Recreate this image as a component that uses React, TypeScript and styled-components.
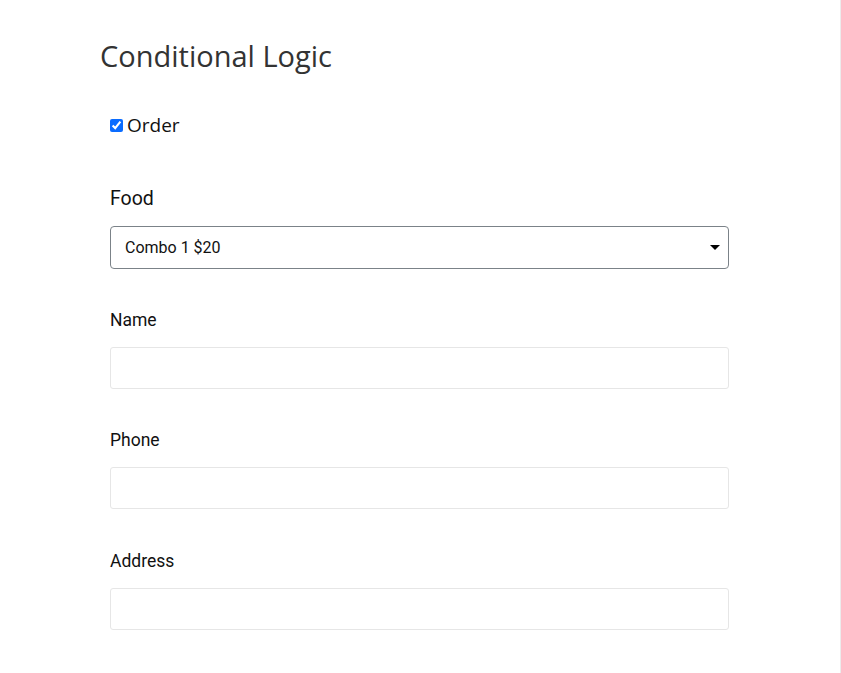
import React from "react";
import styled, { createGlobalStyle } from "styled-components";

const Global = createGlobalStyle`
  html, body { margin: 0; padding: 0; background: #fff; }
  body { width: 841px; height: 673px; overflow: hidden; }
`;

const Page = styled.div`
  box-sizing: border-box;
  width: 841px;
  height: 673px;
  border-right: 1px solid #ececec;
  padding: 37px 0 0 100px;
`;

const Title = styled.h1`
  margin: 0;
  font-family: "Open Sans", "Noto Sans", sans-serif;
  font-weight: 400;
  font-size: 29px;
  line-height: 38px;
  color: #333;
`;

const Form = styled.form`
  display: flex;
  flex-direction: column;
  width: 619px;
  margin: 0 0 0 10px;
  padding-top: 37px;
`;

const CheckRow = styled.label`
  display: flex;
  align-items: center;
  gap: 4px;
  height: 26px;
  font-family: "Open Sans", "Noto Sans", sans-serif;
  font-size: 19px;
  color: #111;
`;

const Check = styled.input`
  margin: 0;
  width: 13px;
  height: 13px;
  accent-color: #0a6cff;
`;

const Field = styled.div<{ $top: number }>`
  display: flex;
  flex-direction: column;
  margin-top: ${(p) => p.$top}px;
`;

const Label = styled.label<{ $size: number }>`
  font-family: Roboto, "Liberation Sans", sans-serif;
  font-size: ${(p) => p.$size}px;
  line-height: 24px;
  color: #111;
  margin-bottom: 15px;
`;

const SelectWrap = styled.div`
  position: relative;
  height: 43px;
`;

const Select = styled.select`
  appearance: none;
  box-sizing: border-box;
  width: 100%;
  height: 43px;
  padding: 0 14px;
  border: 1px solid #7b8288;
  border-radius: 4px;
  background: #fff;
  font-family: Roboto, "Liberation Sans", sans-serif;
  font-size: 16px;
  color: #111;
  outline: none;
`;

const Caret = styled.span`
  position: absolute;
  right: 9px;
  top: 19px;
  width: 0;
  height: 0;
  border-left: 5px solid transparent;
  border-right: 5px solid transparent;
  border-top: 5px solid #000;
  pointer-events: none;
`;

const TextInput = styled.input`
  box-sizing: border-box;
  width: 100%;
  height: 42px;
  border: 1px solid #e6e6e6;
  border-radius: 3px;
  padding: 0 14px;
  font-family: Roboto, "Liberation Sans", sans-serif;
  font-size: 16px;
  outline: none;
`;

export default function App() {
  return (
    <>
      <Global />
      <Page>
        <Title>Conditional Logic</Title>
        <Form>
          <CheckRow>
            <Check type="checkbox" defaultChecked />
            Order
          </CheckRow>
          <Field $top={49}>
            <Label $size={19.5}>Food</Label>
            <SelectWrap>
              <Select defaultValue="c1">
                <option value="c1">Combo 1 $20</option>
                <option value="c2">Combo 2 $25</option>
              </Select>
              <Caret />
            </SelectWrap>
          </Field>
          <Field $top={39}>
            <Label $size={17.5}>Name</Label>
            <TextInput type="text" />
          </Field>
          <Field $top={39}>
            <Label $size={17.5}>Phone</Label>
            <TextInput type="text" />
          </Field>
          <Field $top={40}>
            <Label $size={17.5}>Address</Label>
            <TextInput type="text" />
          </Field>
        </Form>
      </Page>
    </>
  );
}
